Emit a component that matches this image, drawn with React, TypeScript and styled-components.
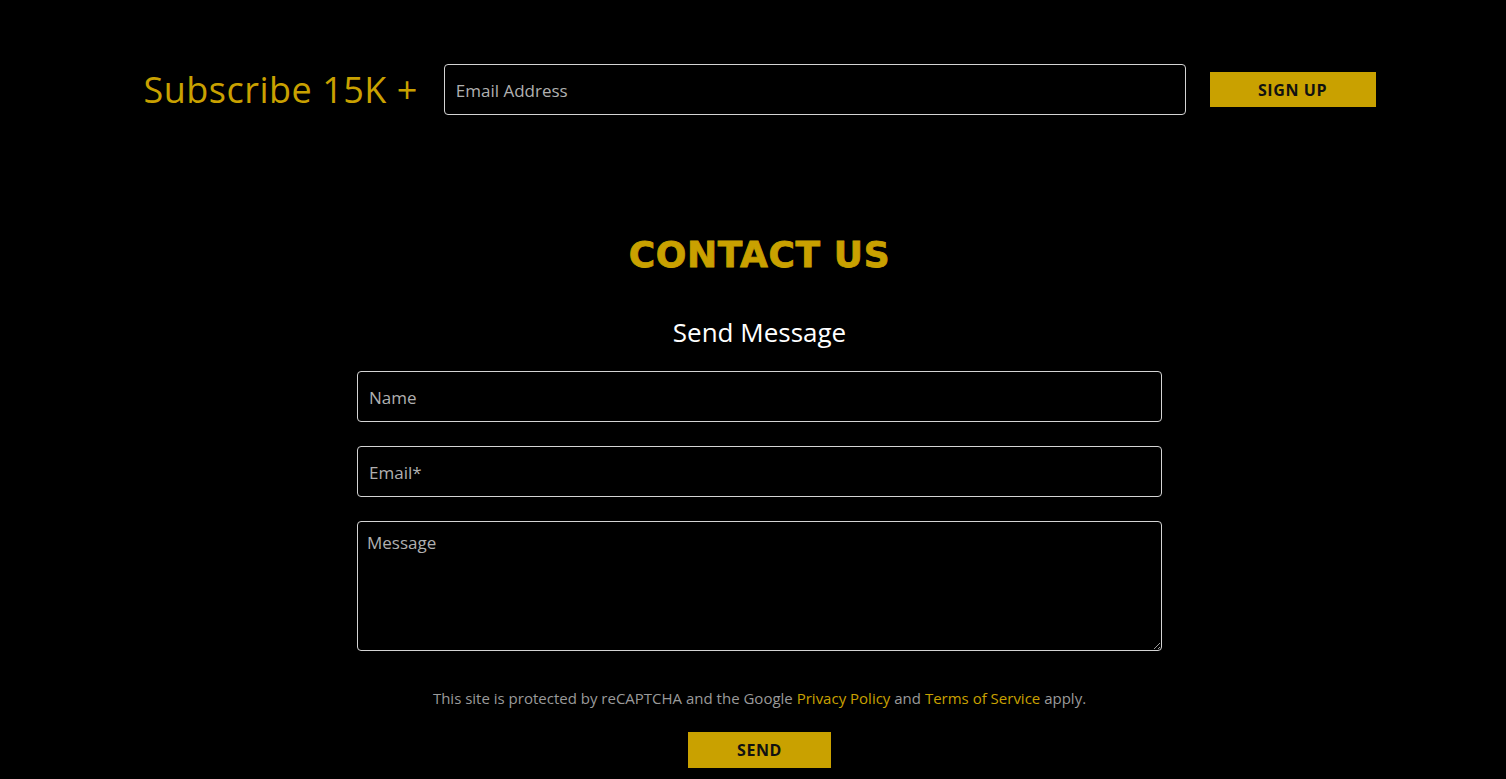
import styled, { createGlobalStyle } from "styled-components";

const GOLD = "#c9a100";

const GlobalStyle = createGlobalStyle`
  html, body {
    margin: 0;
    padding: 0;
    background: #000;
    font-family: "Open Sans", "Noto Sans", sans-serif;
  }
`;

const Page = styled.div`
  min-height: 779px;
  background: #000;
  padding-left: 13px;
  display: flex;
  flex-direction: column;
  align-items: center;
`;

const SubscribeBar = styled.div`
  width: 1232px;
  padding-top: 64px;
  display: flex;
  align-items: center;
`;

const SubscribeTitle = styled.h2`
  margin: 0 26px 0 0;
  font-weight: 400;
  font-size: 36px;
  letter-spacing: 0.5px;
  color: ${GOLD};
  white-space: nowrap;
`;

const Field = styled.input<{ $w?: number }>`
  box-sizing: border-box;
  width: ${(p) => (p.$w ? `${p.$w}px` : "100%")};
  height: 51px;
  background: #000;
  border: 1px solid #d4d4d4;
  border-radius: 4px;
  padding: 2px 11px 0;
  color: #fff;
  font-family: inherit;
  font-size: 17px;
  &::placeholder {
    color: #b0b0b0;
  }
`;

const GoldButton = styled.button<{ $w: number }>`
  width: ${(p) => p.$w}px;
  height: 36px;
  background: ${GOLD};
  border: none;
  color: #111;
  font-family: inherit;
  font-weight: 700;
  font-size: 16px;
  letter-spacing: 0.6px;
  cursor: pointer;
`;

const SignUp = styled(GoldButton)`
  margin-left: 24px;
  height: 35px;
`;

const Contact = styled.section`
  width: 805px;
  margin-top: 118px;
  display: flex;
  flex-direction: column;
  align-items: center;
`;

const Heading = styled.h1`
  margin: 0;
  font-family: "DejaVu Sans", sans-serif;
  font-weight: 900;
  font-size: 36px;
  letter-spacing: 0.6px;
  -webkit-text-stroke: 0.8px ${GOLD};
  color: ${GOLD};
  line-height: 44px;
`;

const Sub = styled.h3`
  margin: 38px 0 22px;
  font-weight: 400;
  font-size: 26px;
  color: #fff;
  line-height: 34px;
`;

const Form = styled.form`
  width: 100%;
  display: flex;
  flex-direction: column;
  gap: 24px;
`;

const Area = styled.textarea`
  box-sizing: border-box;
  width: 100%;
  height: 130px;
  background: #000;
  border: 1px solid #d4d4d4;
  border-radius: 4px;
  padding: 9px 9px;
  color: #fff;
  font-family: inherit;
  font-size: 17px;
  resize: vertical;
  &::placeholder {
    color: #b0b0b0;
  }
`;

const Note = styled.p`
  margin: 37px 0 24px;
  font-size: 15px;
  color: #9a9a9a;
  text-align: center;
`;

const Link = styled.a`
  color: ${GOLD};
  text-decoration: none;
`;

export default function App() {
  return (
    <Page>
      <GlobalStyle />
      <SubscribeBar>
        <SubscribeTitle>Subscribe 15K +</SubscribeTitle>
        <Field $w={742} placeholder="Email Address" />
        <SignUp $w={166}>SIGN UP</SignUp>
      </SubscribeBar>
      <Contact>
        <Heading>CONTACT US</Heading>
        <Sub>Send Message</Sub>
        <Form onSubmit={(e) => e.preventDefault()}>
          <Field placeholder="Name" />
          <Field placeholder="Email*" />
          <Area placeholder="Message" />
        </Form>
        <Note>
          This site is protected by reCAPTCHA and the Google{" "}
          <Link href="#">Privacy Policy</Link> and{" "}
          <Link href="#">Terms of Service</Link> apply.
        </Note>
        <GoldButton $w={143}>SEND</GoldButton>
      </Contact>
    </Page>
  );
}
